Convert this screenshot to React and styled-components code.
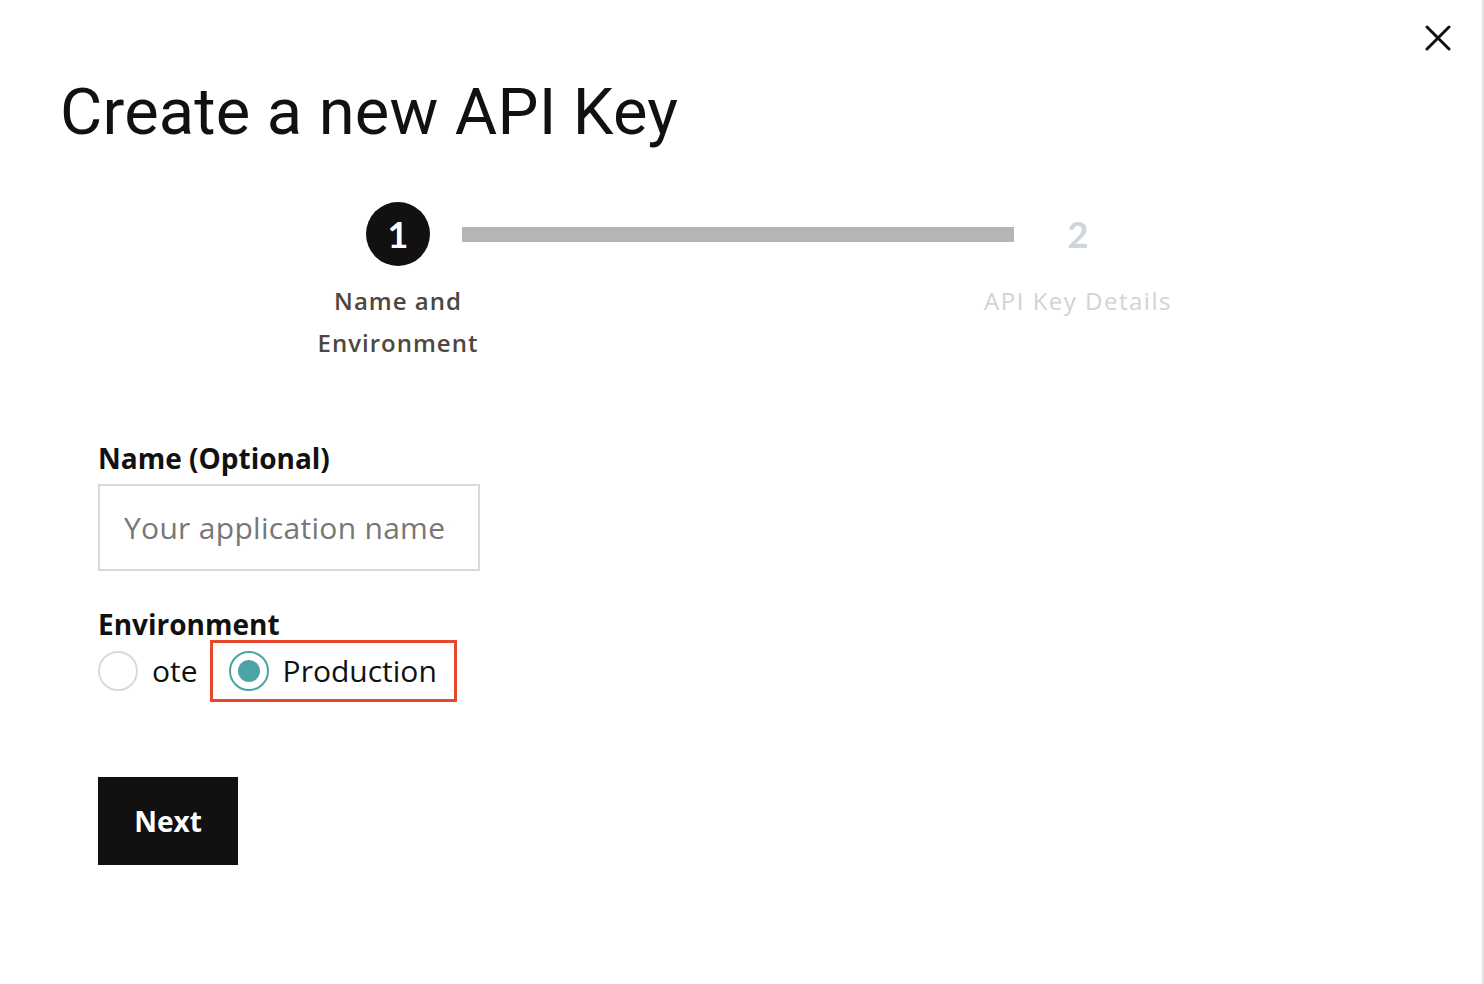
import React from "react";
import styled, { createGlobalStyle } from "styled-components";

const Global = createGlobalStyle`
  html, body { margin: 0; padding: 0; background: #fff; }
  body { font-family: "Open Sans", Lato, sans-serif; color: #111; }
  * { box-sizing: border-box; }
`;

const Page = styled.div`
  position: relative;
  min-height: 984px;
  border-right: 2px solid #e4e4e4;
  padding: 0 0 0 60px;
`;

const Close = styled.button`
  position: absolute;
  top: 24px;
  right: 30px;
  width: 28px;
  height: 28px;
  padding: 0;
  border: 0;
  background: none;
  cursor: pointer;
  display: flex;
  align-items: center;
  justify-content: center;
`;

const Title = styled.h1`
  margin: 0;
  padding-top: 72px;
  font-family: Roboto, "Liberation Sans", sans-serif;
  font-weight: 400;
  font-size: 65px;
  line-height: 80px;
  color: #111;
  letter-spacing: 0.2px;
`;

const Stepper = styled.div`
  display: flex;
  align-items: flex-start;
  margin-top: 50px;
  margin-left: 306px;
  width: 744px;
`;

const Step = styled.div`
  width: 64px;
  flex: none;
  display: flex;
  flex-direction: column;
  align-items: center;
`;

const Circle = styled.div`
  width: 64px;
  height: 64px;
  border-radius: 50%;
  display: flex;
  align-items: center;
  justify-content: center;
  font-family: Lato, sans-serif;
  font-weight: 700;
  font-size: 36px;
  background: ${(p) => (p.$active ? "#111" : "transparent")};
  color: ${(p) => (p.$active ? "#fff" : "#cfd5da")};
`;

const StepLabel = styled.div`
  width: 300px;
  flex: none;
  margin-top: 14px;
  text-align: center;
  font-size: 24px;
  line-height: 42px;
  letter-spacing: ${(p) => (p.$active ? "1px" : "1.5px")};
  font-weight: ${(p) => (p.$active ? 600 : 400)};
  color: ${(p) => (p.$active ? "#4e473e" : "#cdd4da")};
`;

const Connector = styled.div`
  flex: 1;
  height: 15px;
  margin: 25px 32px 0;
  background: #b5b5b5;
`;

const Form = styled.form`
  margin-left: 38px;
  margin-top: 74px;
  display: flex;
  flex-direction: column;
  align-items: flex-start;
`;

const Label = styled.label`
  font-size: 28px;
  font-weight: 700;
  line-height: 40px;
  color: #111;
`;

const Input = styled.input`
  margin-top: 6px;
  width: 382px;
  height: 87px;
  border: 2px solid #d4dbe0;
  padding: 0 24px;
  font-family: "Open Sans", sans-serif;
  font-size: 30px;
  letter-spacing: 0.3px;
  color: #111;
  outline: none;
  &::placeholder { color: #777; }
`;

const EnvLabel = styled(Label)`
  margin-top: 33px;
`;

const RadioRow = styled.div`
  display: flex;
  align-items: center;
  gap: 12px;
  margin-top: -4px;
`;

const Option = styled.label`
  display: flex;
  align-items: center;
  gap: 14px;
  font-size: 30px;
  line-height: 40px;
  color: #111;
  padding: ${(p) => (p.$highlight ? "8px 17px 8px 16px" : "0")};
  border: ${(p) => (p.$highlight ? "3px solid #e8472e" : "0")};
`;

const RadioDot = styled.span`
  width: 40px;
  height: 40px;
  flex: none;
  border-radius: 50%;
  border: 2px solid ${(p) => (p.$checked ? "#4ba3a6" : "#d4dbe0")};
  display: flex;
  align-items: center;
  justify-content: center;
  &::after {
    content: "";
    width: 22px;
    height: 22px;
    border-radius: 50%;
    background: ${(p) => (p.$checked ? "#4ba3a6" : "transparent")};
  }
`;

const NextButton = styled.button`
  margin-top: 75px;
  width: 140px;
  height: 88px;
  border: 0;
  background: #111;
  color: #fff;
  font-family: "Open Sans", sans-serif;
  font-weight: 700;
  font-size: 28px;
  cursor: pointer;
`;

export default function App() {
  return (
    <>
      <Global />
      <Page>
        <Close aria-label="Close">
          <svg width="26" height="26" viewBox="0 0 26 26">
            <path d="M2 2 L24 24 M24 2 L2 24" stroke="#111" strokeWidth="3" strokeLinecap="round" />
          </svg>
        </Close>
        <Title>Create a new API Key</Title>
        <Stepper>
          <Step>
            <Circle $active>1</Circle>
            <StepLabel $active>Name and<br />Environment</StepLabel>
          </Step>
          <Connector />
          <Step>
            <Circle>2</Circle>
            <StepLabel>API Key Details</StepLabel>
          </Step>
        </Stepper>
        <Form onSubmit={(e) => e.preventDefault()}>
          <Label htmlFor="appname">Name (Optional)</Label>
          <Input id="appname" placeholder="Your application name will appear here" />
          <EnvLabel>Environment</EnvLabel>
          <RadioRow>
            <Option>
              <RadioDot />
              ote
            </Option>
            <Option $highlight>
              <RadioDot $checked />
              Production
            </Option>
          </RadioRow>
          <NextButton type="submit">Next</NextButton>
        </Form>
      </Page>
    </>
  );
}
